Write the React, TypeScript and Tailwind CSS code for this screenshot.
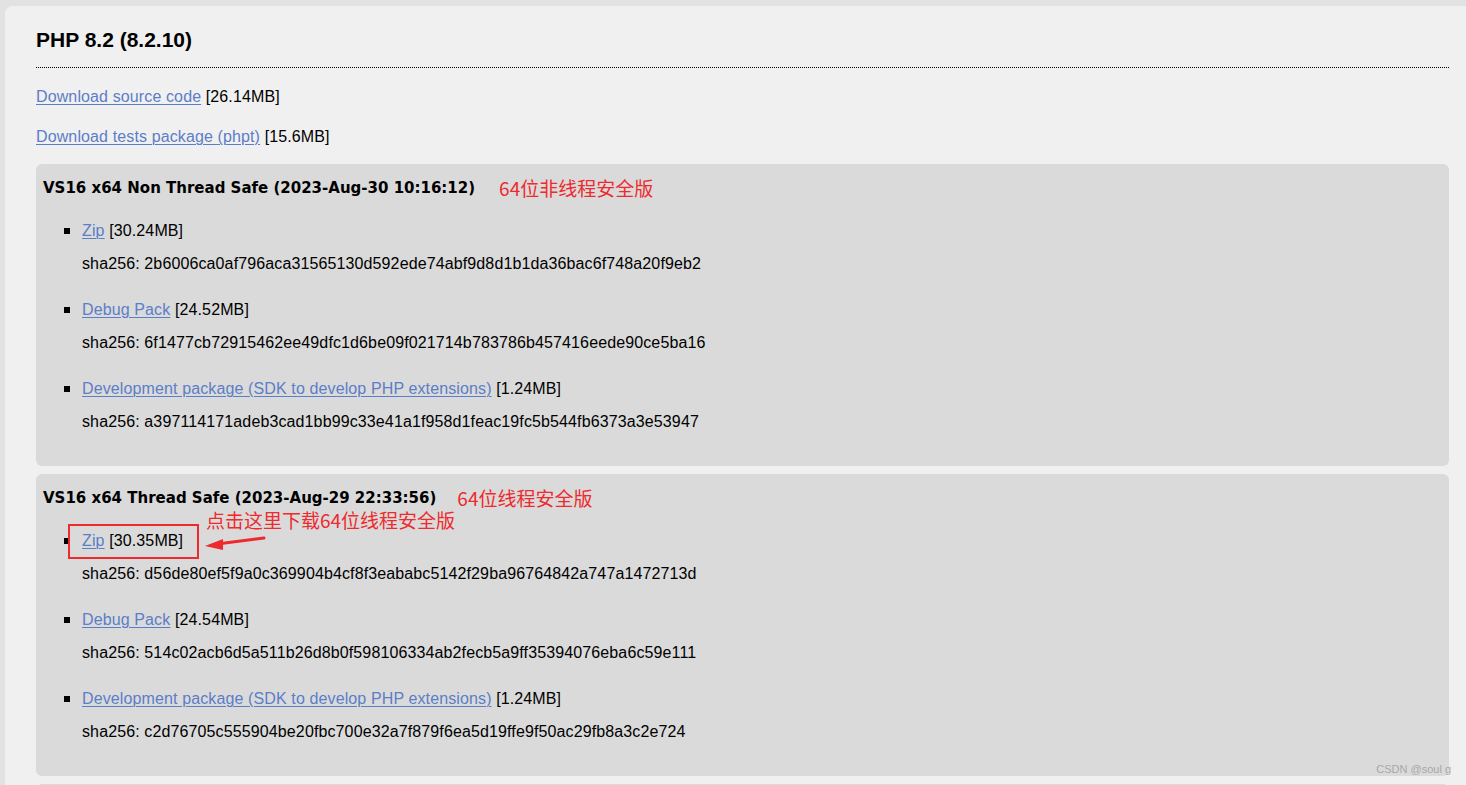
import React from 'react';

interface Pkg {
  label: string;
  size: string;
  sha: string;
}

interface Build {
  title: string;
  note: string;
  pkgs: Pkg[];
}

const builds: Build[] = [
  {
    title: 'VS16 x64 Non Thread Safe (2023-Aug-30 10:16:12)',
    note: '64位非线程安全版',
    pkgs: [
      { label: 'Zip', size: '[30.24MB]', sha: '2b6006ca0af796aca31565130d592ede74abf9d8d1b1da36bac6f748a20f9eb2' },
      { label: 'Debug Pack', size: '[24.52MB]', sha: '6f1477cb72915462ee49dfc1d6be09f021714b783786b457416eede90ce5ba16' },
      { label: 'Development package (SDK to develop PHP extensions)', size: '[1.24MB]', sha: 'a397114171adeb3cad1bb99c33e41a1f958d1feac19fc5b544fb6373a3e53947' },
    ],
  },
  {
    title: 'VS16 x64 Thread Safe (2023-Aug-29 22:33:56)',
    note: '64位线程安全版',
    pkgs: [
      { label: 'Zip', size: '[30.35MB]', sha: 'd56de80ef5f9a0c369904b4cf8f3eababc5142f29ba96764842a747a1472713d' },
      { label: 'Debug Pack', size: '[24.54MB]', sha: '514c02acb6d5a511b26d8b0f598106334ab2fecb5a9ff35394076eba6c59e111' },
      { label: 'Development package (SDK to develop PHP extensions)', size: '[1.24MB]', sha: 'c2d76705c555904be20fbc700e32a7f879f6ea5d19ffe9f50ac29fb8a3c2e724' },
    ],
  },
];

const linkCls = 'text-[#5b7ec8] underline underline-offset-2 decoration-1';

const PkgItem: React.FC<{ pkg: Pkg; marked?: boolean }> = ({ pkg, marked }) => (
  <li className="relative flex">
    <span className="ml-[21px] w-[6px] shrink-0 pt-[9px]">
      <span className="block w-[6px] h-[6px] bg-black" />
    </span>
    <div className="relative ml-[12px]">
      <div className="h-[24px] leading-[24px]">
        <a href="#" className={linkCls}>{pkg.label}</a> {pkg.size}
      </div>
      <div className="mt-[9px] h-[24px] leading-[24px]">sha256: {pkg.sha}</div>
      {marked && (
        <>
          {/* red box + arrow drawn over the Zip row */}
          <div className="absolute left-[-14px] top-[-5px] w-[131px] h-[35px] border-2 border-[#ee2a2e]" />
          <svg className="absolute left-[121px] top-[3px]" width="70" height="20" viewBox="0 0 70 20">
            <line x1="61" y1="6" x2="14" y2="12" stroke="#ee2a2e" strokeWidth="3" strokeLinecap="round" />
            <polygon points="2,14 20,7 20,18" fill="#ee2a2e" />
          </svg>
          <div className="absolute left-[124px] top-[-21px] whitespace-nowrap h-[24px] leading-[24px] text-[19px] tracking-normal text-[#ee2a2e] font-['Noto_Sans_CJK_SC',sans-serif]">
            点击这里下载64位线程安全版
          </div>
        </>
      )}
    </div>
  </li>
);

const BuildBox: React.FC<{ build: Build; idx: number }> = ({ build, idx }) => (
  <div className={`relative bg-[#dadada] rounded-[6px] pl-[7px] pb-[32px] ${idx === 0 ? 'pt-[12px]' : 'pt-[12px] mt-[8px]'}`}>
    <div className="flex items-center h-[24px]">
      <h3 className="font-['DejaVu_Sans',sans-serif] font-bold text-[15px] leading-[24px] tracking-normal text-black">{build.title}</h3>
      <span className={`${idx === 0 ? 'ml-[24px]' : 'ml-[21px]'} text-[19px] leading-[24px] tracking-normal text-[#ee2a2e] font-['Noto_Sans_CJK_SC',sans-serif]`}>{build.note}</span>
    </div>
    <ul className="flex flex-col gap-[22px] mt-[19px]">
      {build.pkgs.map((p, i) => (
        <PkgItem key={p.label} pkg={p} marked={idx === 1 && i === 0} />
      ))}
    </ul>
    {idx === 1 && (
      <span className="absolute right-[-2px] bottom-0 text-[11px] leading-[14px] tracking-normal text-[#a8a8a8]">CSDN @soul g</span>
    )}
  </div>
);

export default function App() {
  return (
    <div className="h-screen overflow-hidden bg-[#e2e2e2] pt-[6px] pl-[5px] font-['Liberation_Sans',Arial,sans-serif] text-[16px] tracking-[0.12px] text-black">
      <div className="h-full bg-[#f0f0f0] rounded-tl-[8px] pl-[31px] pr-[17px] pt-[20px]">
        <h2 className="font-['Liberation_Sans',Arial,sans-serif] font-bold text-[21px] leading-[28px] tracking-normal pb-[13px] border-b border-dotted border-black">
          PHP 8.2 (8.2.10)
        </h2>
        <p className="mt-[17px] h-[24px] leading-[24px]">
          <a href="#" className={linkCls}>Download source code</a> [26.14MB]
        </p>
        <p className="mt-[16px] h-[24px] leading-[24px]">
          <a href="#" className={linkCls}>Download tests package (phpt)</a> [15.6MB]
        </p>
        <div className="mt-[15px]">
          {builds.map((b, i) => (
            <BuildBox key={b.title} build={b} idx={i} />
          ))}
          <div className="mt-[8px] h-[60px] bg-[#dadada] rounded-t-[6px]" />
        </div>
      </div>
    </div>
  );
}
